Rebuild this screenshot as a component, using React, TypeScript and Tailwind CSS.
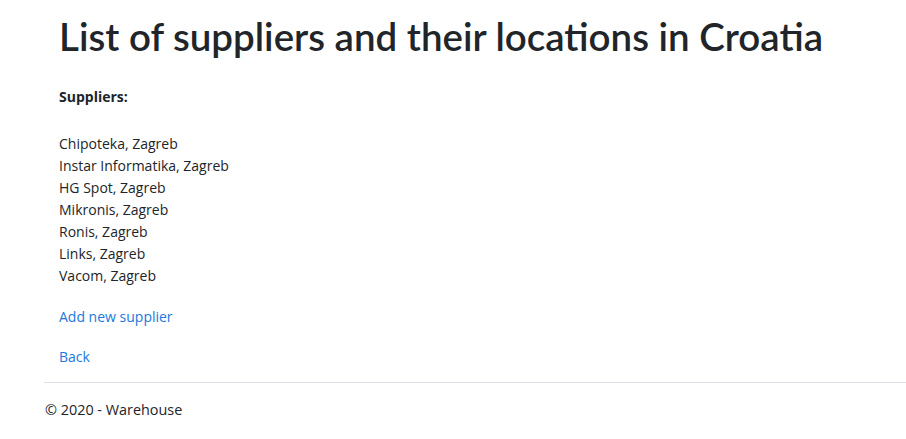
export default function App() {
  const suppliers = [
    "Chipoteka, Zagreb",
    "Instar Informatika, Zagreb",
    "HG Spot, Zagreb",
    "Mikronis, Zagreb",
    "Ronis, Zagreb",
    "Links, Zagreb",
    "Vacom, Zagreb",
  ];
  return (
    <div className="min-h-[439px] bg-white text-[#212529] [font-family:'Open_Sans',sans-serif]">
      <main className="pl-[59px] pt-[12px]">
        <h1 className="text-[38.5px] leading-[48px] font-semibold [font-family:Lato,sans-serif]">List of suppliers and their locations in Croatia</h1>
        <p className="mt-[26px] text-[14px] leading-[22px] font-bold">Suppliers:</p>
        <ul className="mt-[25px] text-[14px] leading-[22px]">
          {suppliers.map((s) => (
            <li key={s}>{s}</li>
          ))}
        </ul>
        <a href="#" className="mt-[19px] block text-[14px] leading-[22px] text-[#1a78e0]">Add new supplier</a>
        <a href="#" className="mt-[18px] block text-[14px] leading-[22px] text-[#1a78e0]">Back</a>
      </main>
      <footer className="ml-[44px] mt-[14px] border-t border-[#dee2e6] pl-[1px] pt-[16px] text-[14.4px] leading-[22px]">
        © 2020 - Warehouse
      </footer>
    </div>
  );
}
